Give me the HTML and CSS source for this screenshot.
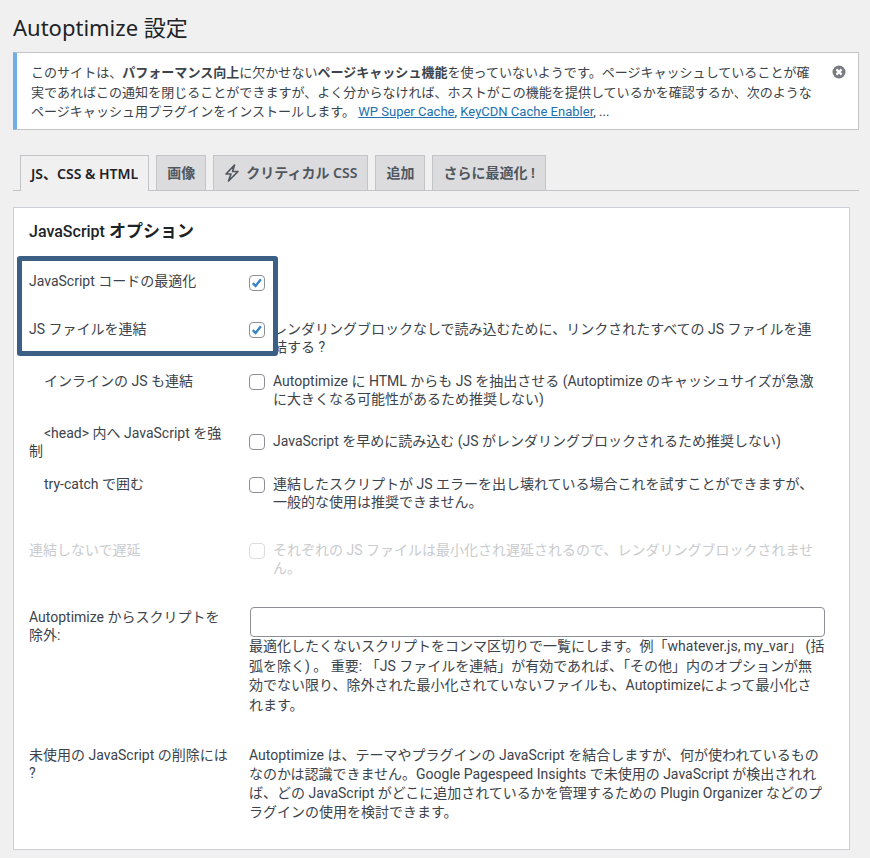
FILE: index.html
```html
<!DOCTYPE html>
<html lang="ja">
<head>
	<meta charset="utf-8">
	<title>Autoptimize 設定</title>
	<link rel="stylesheet" href="styles.css">
</head>
<body>

<h1 class="title">Autoptimize 設定</h1>

<div class="notice">
	<p>このサイトは、<b>パフォーマンス向上</b>に欠かせない<b>ページキャッシュ機能</b>を使っていないようです。ページキャッシュしていることが確<br>実であればこの通知を閉じることができますが、よく分からなければ、ホストがこの機能を提供しているかを確認するか、次のような<br>ページキャッシュ用プラグインをインストールします。 <a href="#">WP Super Cache</a>, <a href="#">KeyCDN Cache Enabler</a>, ...</p>
	<svg class="dismiss" viewBox="0 0 14 14"><circle cx="7" cy="7" r="6.5" fill="#787c82"/><path d="M4.4 4.4l5.2 5.2M9.6 4.4l-5.2 5.2" stroke="#fff" stroke-width="2.2" fill="none"/></svg>
</div>

<div class="tabs">
	<a class="tab active">JS、CSS &amp; HTML</a>
	<a class="tab">画像</a>
	<a class="tab"><svg class="bolt" viewBox="0 0 16 18"><path d="M10.5 1L2 10h5l-2.5 7L14 7.5H8.6z" fill="none" stroke="#50575e" stroke-width="1.7" stroke-linejoin="round"/></svg>クリティカル CSS</a>
	<a class="tab">追加</a>
	<a class="tab">さらに最適化 !</a>
</div>

<div class="panel">
	<h2 class="panel-title">JavaScript <b>オプション</b></h2>

	<div class="highlight"></div>

	<div class="row row-main">
		<div class="label">JavaScript コードの最適化</div>
		<div class="field"><span class="check on"><svg viewBox="0 0 16 16"><path d="M3.2 8.2l3.2 3.2 6-7.6" fill="none" stroke="#3582c4" stroke-width="2.6"/></svg></span></div>
	</div>

	<div class="row row-concat">
		<div class="label">JS ファイルを連結</div>
		<div class="field"><span class="check on"><svg viewBox="0 0 16 16"><path d="M3.2 8.2l3.2 3.2 6-7.6" fill="none" stroke="#3582c4" stroke-width="2.6"/></svg></span><span class="text">レンダリングブロックなしで読み込むために、リンクされたすべての JS ファイルを連<br>結する ?</span></div>
	</div>

	<div class="row row-inline">
		<div class="label sub">インラインの JS も連結</div>
		<div class="field"><span class="check"></span><span class="text">Autoptimize に HTML からも JS を抽出させる (Autoptimize のキャッシュサイズが急激<br>に大きくなる可能性があるため推奨しない)</span></div>
	</div>

	<div class="row row-head">
		<div class="label"><span class="sub-first">&lt;head&gt; 内へ JavaScript を強</span><br>制</div>
		<div class="field"><span class="check"></span><span class="text">JavaScript を早めに読み込む (JS がレンダリングブロックされるため推奨しない)</span></div>
	</div>

	<div class="row row-try">
		<div class="label sub">try-catch で囲む</div>
		<div class="field"><span class="check"></span><span class="text">連結したスクリプトが JS エラーを出し壊れている場合これを試すことができますが、<br>一般的な使用は推奨できません。</span></div>
	</div>

	<div class="row row-defer disabled">
		<div class="label">連結しないで遅延</div>
		<div class="field"><span class="check"></span><span class="text">それぞれの JS ファイルは最小化され遅延されるので、レンダリングブロックされませ<br>ん。</span></div>
	</div>

	<div class="row row-exclude">
		<div class="label">Autoptimize からスクリプトを<br>除外:</div>
		<div class="field stack">
			<input class="input" type="text">
			<p class="desc">最適化したくないスクリプトをコンマ区切りで一覧にします。例「whatever.js, my_var」 (括<br>弧を除く) 。 重要: 「JS ファイルを連結」が有効であれば、「その他」内のオプションが無<br>効でない限り、除外された最小化されていないファイルも、Autoptimizeによって最小化さ<br>れます。</p>
		</div>
	</div>

	<div class="row row-unused">
		<div class="label">未使用の JavaScript の削除には<br>?</div>
		<div class="field stack">
			<p class="desc">Autoptimize は、テーマやプラグインの JavaScript を結合しますが、何が使われているもの<br>なのかは認識できません。Google Pagespeed Insights で未使用の JavaScript が検出されれ<br>ば、どの JavaScript がどこに追加されているかを管理するための Plugin Organizer などのプ<br>ラグインの使用を検討できます。</p>
		</div>
	</div>
</div>

</body>
</html>
```

FILE: styles.css
```css
html, body {
	height: 858px;
	overflow: hidden;
}

body {
	margin: 0;
	padding: 0 11px 0 13px;
	background: #f0f0f1;
	color: #3c434a;
	font-family: Roboto, "Noto Sans CJK JP", sans-serif;
	font-size: 13px;
	line-height: 19.5px;
}

.title {
	margin: 0;
	padding-top: 13px;
	height: 39px;
	color: #1d2327;
	font-family: "Noto Sans", "Noto Sans CJK JP", sans-serif;
	font-size: 22px;
	font-weight: 400;
	line-height: 29px;
}

.notice {
	display: flex;
	justify-content: space-between;
	height: 78px;
	box-sizing: border-box;
	padding: 10px 12px 0 14px;
	background: #fff;
	border: 1px solid #c3c4c7;
	border-left: 4px solid #72aee6;
}

.notice p {
	margin: 0;
	font-size: 13.04px;
	white-space: nowrap;
}

.notice a {
	color: #2271b1;
}

.dismiss {
	width: 14px;
	height: 14px;
	margin-top: 2px;
}

.tabs {
	display: flex;
	gap: 7px;
	height: 35px;
	margin-top: 25px;
	padding-left: 7px;
	border-bottom: 1px solid #c3c4c7;
}

.tab {
	display: flex;
	align-items: center;
	height: 34px;
	padding: 0 10px;
	background: #dcdcde;
	border: 1px solid #c3c4c7;
	border-bottom: 0;
	color: #50575e;
	font-family: "Noto Sans", "Noto Sans CJK JP", sans-serif;
	font-size: 14px;
	font-weight: 600;
	white-space: nowrap;
}

.tab.active {
	height: 35px;
	background: #f0f0f1;
	color: #1d2327;
	position: relative;
	z-index: 1;
}

.bolt {
	width: 16px;
	height: 18px;
	margin-right: 6px;
}

.panel {
	position: relative;
	width: 837px;
	height: 643px;
	box-sizing: border-box;
	margin-top: 16px;
	padding: 0 24px 0 15px;
	background: #fff;
	border: 1px solid #ccd0d4;
	font-size: 14px;
	line-height: 18.2px;
	overflow: hidden;
}

.panel-title {
	margin: 0;
	padding-top: 13px;
	height: 49px;
	box-sizing: border-box;
	color: #1d2327;
	font-size: 16px;
	font-weight: 500;
	line-height: 20px;
}

.panel-title b {
	font-size: 17px;
	font-weight: 700;
}

.highlight {
	position: absolute;
	left: 3px;
	top: 48px;
	width: 251px;
	height: 90px;
	border: 5px solid #3b5f85;
	border-radius: 3px;
}

.row {
	display: flex;
}

.label {
	flex: 0 0 220px;
	box-sizing: border-box;
	width: 220px;
}

.label.sub, .sub-first {
	padding-left: 15px;
}

.field {
	display: flex;
	flex: 1;
	align-items: flex-start;
}

.field.stack {
	display: block;
}

.check {
	flex: 0 0 16px;
	width: 16px;
	height: 16px;
	margin: 2px 8px 0 0;
	background: #fff;
	border: 1px solid #8c8f94;
	border-radius: 4px;
	box-sizing: border-box;
}

.check svg {
	display: block;
	width: 14px;
	height: 14px;
}

.text {
	white-space: nowrap;
}

.row-main {
	margin-top: 15px;
	height: 48px;
}

.row-main .check {
	margin-top: 3px;
}

.row-concat {
	height: 52px;
}

.row-inline {
	height: 52px;
}

.row-head {
	height: 51px;
}

.row-head .field {
	margin-top: 8px;
}

.row-try {
	height: 66px;
}

.row-defer {
	height: 58px;
}

.row-defer .label,
.row-defer .text {
	color: #c9cbce;
}

.row-defer .check {
	border-color: #dcdcde;
}

.row-exclude {
	height: 138px;
	padding-top: 9px;
}

.input {
	display: block;
	width: 575px;
	height: 30px;
	box-sizing: border-box;
	margin: -1px 0 0 1px;
	background: #fff;
	border: 1px solid #8c8f94;
	border-radius: 4px;
}

.desc {
	margin: 0;
	line-height: 19.6px;
	white-space: nowrap;
}

.row-exclude .desc {
	margin-top: 0;
}

.row-unused .desc {
	line-height: 19px;
}
```
